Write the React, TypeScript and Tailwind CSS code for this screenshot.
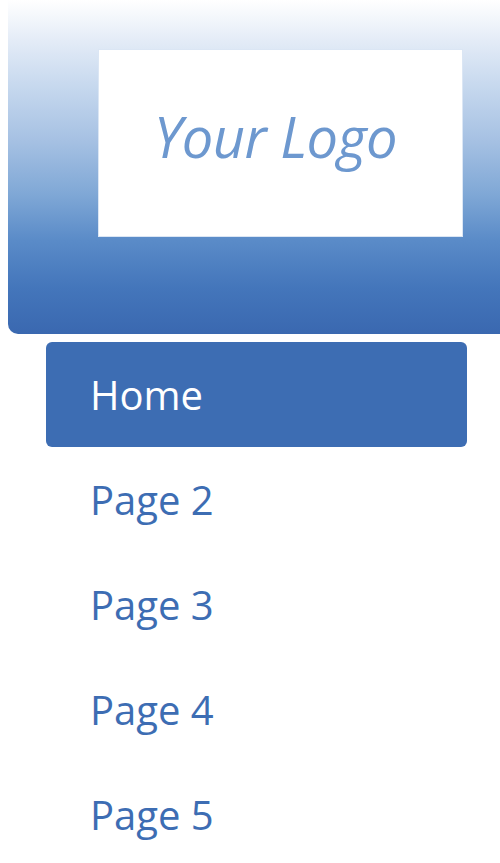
const pages = ['Home', 'Page 2', 'Page 3', 'Page 4', 'Page 5'];

export default function App() {
    const active = 'Home';

    return (
        <div className="w-[500px] h-[863px] overflow-hidden bg-white font-['Open_Sans',sans-serif]">
            {/* Header with logo */}
            <header className="ml-2 h-[334px] rounded-bl-[10px] bg-[linear-gradient(to_bottom,#ffffff_0%,#e4ecf7_12%,#c6d8ee_26%,#a6c1e3_42%,#80a8d6_58%,#5a8bc8_72%,#4476bb_86%,#3a68b0_100%)] pt-[49px] pl-[90px]">
                <div className="w-[365px] h-[188px] bg-white border border-[#dbe6f4] flex items-center justify-center pb-[14px] pr-[10px]">
                    <span className="italic text-[56px] leading-none text-[#6d98cf] tracking-[-0.5px]">Your Logo</span>
                </div>
            </header>

            {/* Navigation */}
            <nav className="mt-2 px-[46px] pr-[33px]">
                {pages.map((page) => (
                    <a
                        key={page}
                        href="#"
                        className={
                            page === active
                                ? 'flex h-[105px] items-center pl-[44px] rounded-md bg-[#3d6db3] text-white text-[40px]'
                                : 'flex h-[105px] items-center pl-[44px] text-[#3d6db3] text-[40px]'
                        }
                    >
                        {page}
                    </a>
                ))}
            </nav>
        </div>
    );
}
